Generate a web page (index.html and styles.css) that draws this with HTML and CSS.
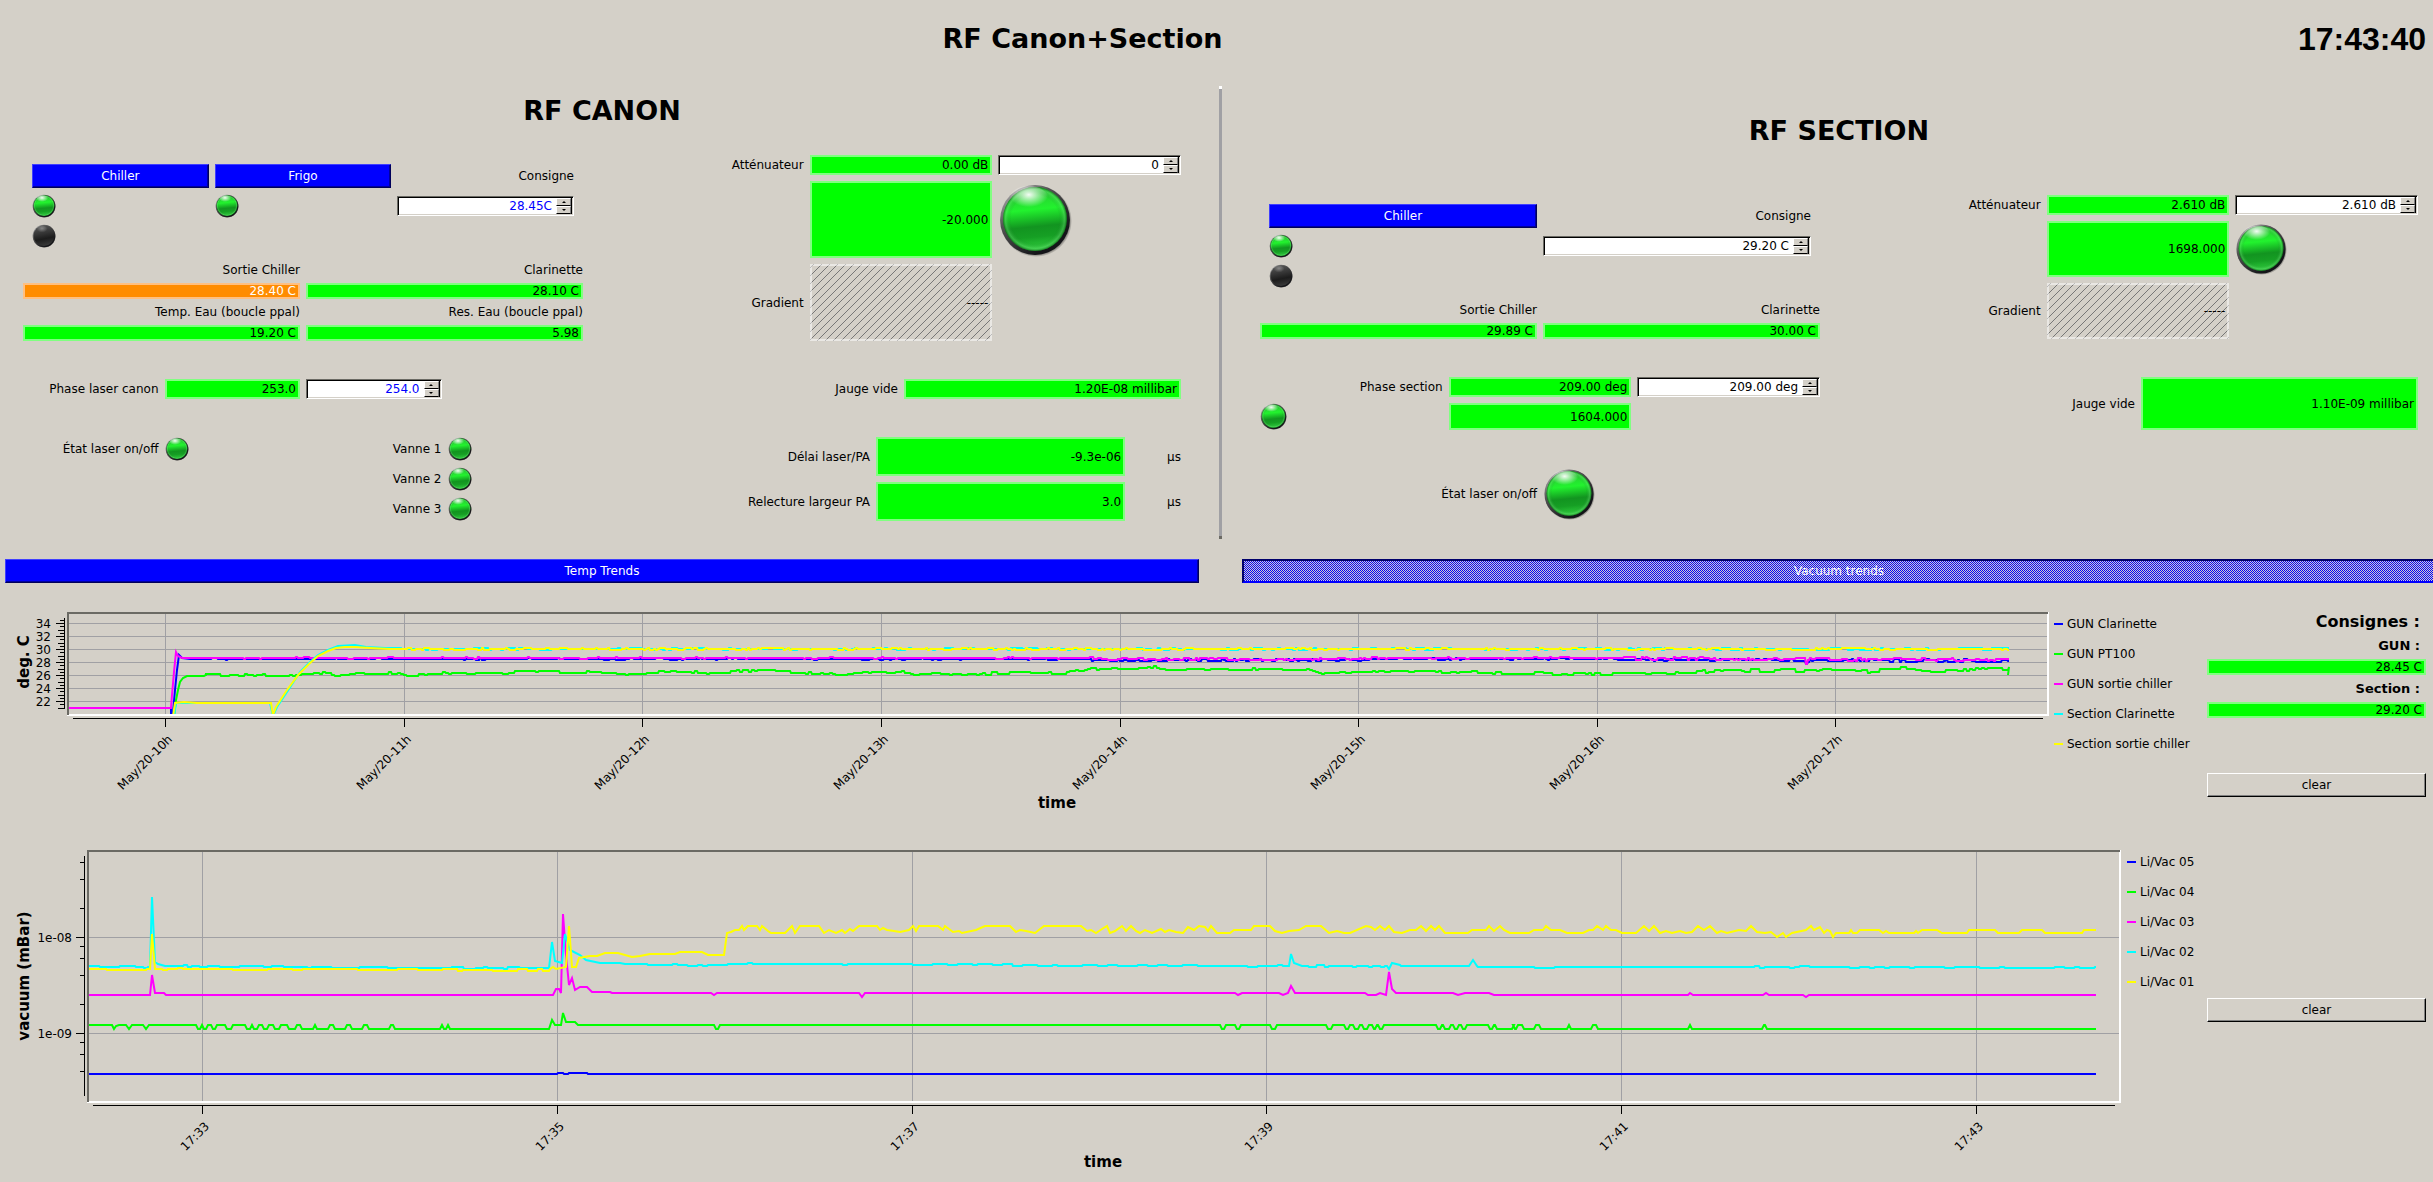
FILE: index.html
```html
<!DOCTYPE html>
<html lang="fr">
<head>
<meta charset="utf-8">
<title>RF Canon+Section</title>
<link rel="stylesheet" href="styles.css">
</head>
<body>
<svg class="defs" aria-hidden="true">
  <defs>
    <linearGradient id="rim" x1="0.15" y1="0.05" x2="0.75" y2="0.8">
      <stop offset="0" stop-color="#a8a8a8"/><stop offset="0.35" stop-color="#555"/><stop offset="1" stop-color="#141418"/>
    </linearGradient>
    <linearGradient id="glass" x1="0.45" y1="0" x2="0.55" y2="1">
      <stop offset="0" stop-color="#2bbf35"/><stop offset="0.35" stop-color="#22f22e"/><stop offset="0.62" stop-color="#129420"/><stop offset="0.78" stop-color="#169f24"/><stop offset="1" stop-color="#33d541"/>
    </linearGradient>
    <radialGradient id="edge" cx="0.5" cy="0.5" r="0.5">
      <stop offset="0.75" stop-color="#0a6a14" stop-opacity="0"/><stop offset="0.92" stop-color="#6fe07a" stop-opacity="0.35"/><stop offset="1" stop-color="#0a5a12" stop-opacity="0.7"/>
    </radialGradient>
    <radialGradient id="shine" cx="0.5" cy="0.35" r="0.5">
      <stop offset="0" stop-color="#fff" stop-opacity="0.95"/><stop offset="1" stop-color="#fff" stop-opacity="0"/>
    </radialGradient>
    <linearGradient id="off" x1="0.4" y1="0" x2="0.6" y2="1">
      <stop offset="0" stop-color="#555"/><stop offset="0.4" stop-color="#333"/><stop offset="0.65" stop-color="#1c1c1c"/><stop offset="1" stop-color="#3a3a3a"/>
    </linearGradient>
    <radialGradient id="shade" cx="0.5" cy="0.5" r="0.5">
      <stop offset="0.9" stop-color="#000" stop-opacity="0.55"/><stop offset="1" stop-color="#000" stop-opacity="0"/>
    </radialGradient>
  </defs>
  <symbol id="led-on" viewBox="0 0 72 72">
    <circle cx="37" cy="37" r="35" fill="url(#shade)"/>
    <circle cx="36" cy="36" r="34" fill="url(#rim)"/>
    <circle cx="36" cy="35" r="31" fill="url(#glass)"/>
    <circle cx="36" cy="35" r="31" fill="url(#edge)"/>
    <ellipse cx="30" cy="15" rx="19" ry="12" fill="url(#shine)"/>
  </symbol>
  <symbol id="led-off" viewBox="0 0 72 72">
    <circle cx="37" cy="37" r="35" fill="url(#shade)"/>
    <circle cx="36" cy="36" r="34" fill="url(#rim)"/>
    <circle cx="36" cy="35" r="31" fill="url(#off)"/>
    <ellipse cx="30" cy="17" rx="17" ry="12" fill="url(#shine)" opacity="0.35"/>
  </symbol>
</svg>

<header class="top">
  <h1>RF Canon+Section</h1>
  <time class="clock">17:43:40</time>
</header>

<main>
<div class="panes">
  <section class="pane pane-canon">
    <h2>RF CANON</h2>
    <div class="groups">
      <div class="block">
        <div class="box cols-3">
          <button class="cmd" type="button">Chiller</button>
          <button class="cmd" type="button">Frigo</button>
          <label class="lbl" for="c-consigne">Consigne</label>
          <svg class="led" role="img" aria-label="Chiller on"><use href="#led-on"/></svg>
          <svg class="led" role="img" aria-label="Frigo on"><use href="#led-on"/></svg>
          <div class="spin"><input id="c-consigne" class="blue" type="text" value="28.45C"><span class="arrows"><button type="button" aria-label="+" class="up"></button><button type="button" aria-label="-" class="down"></button></span></div>
          <svg class="led" role="img" aria-label="Chiller off"><use href="#led-off"/></svg>
        </div>
        <div class="cols-2 thin">
          <label class="lbl" for="c-sortie">Sortie Chiller</label>
          <label class="lbl" for="c-clar">Clarinette</label>
          <output class="val warn" id="c-sortie">28.40 C</output>
          <output class="val" id="c-clar">28.10 C</output>
          <label class="lbl" for="c-temp">Temp. Eau (boucle ppal)</label>
          <label class="lbl" for="c-res">Res. Eau (boucle ppal)</label>
          <output class="val" id="c-temp">19.20 C</output>
          <output class="val" id="c-res">5.98</output>
        </div>
      </div>
      <div class="block cols-3 rows-att">
        <label class="lbl" for="c-att">Atténuateur</label>
        <output class="val" id="c-att">0.00 dB</output>
        <div class="spin"><input type="text" value="0" aria-label="Atténuateur"><span class="arrows"><button type="button" aria-label="+" class="up"></button><button type="button" aria-label="-" class="down"></button></span></div>
        <output class="val second" id="c-lvl">-20.000</output>
        <svg class="led xl" role="img" aria-label="on"><use href="#led-on"/></svg>
        <label class="lbl" for="c-grad">Gradient</label>
        <output class="val none" id="c-grad">-----</output>
      </div>
      <div class="cols-4">
        <label class="lbl" for="c-phase">Phase laser canon</label>
        <output class="val" id="c-phase">253.0</output>
        <div class="spin"><input class="blue" type="text" value="254.0" aria-label="Phase laser canon"><span class="arrows"><button type="button" aria-label="+" class="up"></button><button type="button" aria-label="-" class="down"></button></span></div>
      </div>
      <div class="cols-2">
        <label class="lbl" for="c-vide">Jauge vide</label>
        <output class="val" id="c-vide">1.20E-08 millibar</output>
      </div>
      <div class="cols-4 rows-led">
        <span class="lbl">État laser on/off</span>
        <svg class="led" role="img" aria-label="on"><use href="#led-on"/></svg>
        <span class="lbl">Vanne 1</span>
        <svg class="led" role="img" aria-label="on"><use href="#led-on"/></svg>
        <span class="lbl third">Vanne 2</span>
        <svg class="led" role="img" aria-label="on"><use href="#led-on"/></svg>
        <span class="lbl third">Vanne 3</span>
        <svg class="led" role="img" aria-label="on"><use href="#led-on"/></svg>
      </div>
      <div class="cols-unit">
        <label class="lbl" for="c-delai">Délai laser/PA</label>
        <output class="val" id="c-delai">-9.3e-06</output>
        <span class="lbl">µs</span>
        <label class="lbl" for="c-larg">Relecture largeur PA</label>
        <output class="val" id="c-larg">3.0</output>
        <span class="lbl">µs</span>
      </div>
    </div>
  </section>

  <div class="divider"></div>

  <section class="pane pane-section">
    <h2>RF SECTION</h2>
    <div class="groups">
      <div class="block">
        <div class="box cols-2">
          <button class="cmd" type="button">Chiller</button>
          <label class="lbl" for="s-consigne">Consigne</label>
          <svg class="led" role="img" aria-label="Chiller on"><use href="#led-on"/></svg>
          <div class="spin"><input id="s-consigne" type="text" value="29.20 C"><span class="arrows"><button type="button" aria-label="+" class="up"></button><button type="button" aria-label="-" class="down"></button></span></div>
          <svg class="led" role="img" aria-label="Chiller off"><use href="#led-off"/></svg>
        </div>
        <div class="cols-2 thin">
          <label class="lbl" for="s-sortie">Sortie Chiller</label>
          <label class="lbl" for="s-clar">Clarinette</label>
          <output class="val" id="s-sortie">29.89 C</output>
          <output class="val" id="s-clar">30.00 C</output>
        </div>
      </div>
      <div class="block cols-3 rows-att">
        <label class="lbl" for="s-att">Atténuateur</label>
        <output class="val" id="s-att">2.610 dB</output>
        <div class="spin"><input type="text" value="2.610 dB" aria-label="Atténuateur"><span class="arrows"><button type="button" aria-label="+" class="up"></button><button type="button" aria-label="-" class="down"></button></span></div>
        <output class="val second" id="s-lvl">1698.000</output>
        <svg class="led lg" role="img" aria-label="on"><use href="#led-on"/></svg>
        <label class="lbl" for="s-grad">Gradient</label>
        <output class="val none" id="s-grad">-----</output>
      </div>
      <div class="cols-3 rows-phase">
        <label class="lbl" for="s-phase">Phase section</label>
        <output class="val" id="s-phase">209.00 deg</output>
        <div class="spin"><input type="text" value="209.00 deg" aria-label="Phase section"><span class="arrows"><button type="button" aria-label="+" class="up"></button><button type="button" aria-label="-" class="down"></button></span></div>
        <svg class="led md" role="img" aria-label="on"><use href="#led-on"/></svg>
        <output class="val" id="s-phase2">1604.000</output>
      </div>
      <div class="cols-2">
        <label class="lbl" for="s-vide">Jauge vide</label>
        <output class="val" id="s-vide">1.10E-09 millibar</output>
      </div>
      <div class="cols-2 rows-laser">
        <span class="lbl">État laser on/off</span>
        <svg class="led lg" role="img" aria-label="on"><use href="#led-on"/></svg>
      </div>
    </div>
  </section>
</div>

<nav class="tabs">
  <button class="cmd" type="button">Temp Trends</button>
  <button class="cmd pressed" type="button" aria-pressed="true">Vacuum trends</button>
</nav>

<section class="trend trend-temp">
  <svg id="temp" class="plot" viewBox="5 602 2045 213" role="img" aria-label="deg. C / time"></svg>
  <ul class="legend">
    <li><i class="key k-blue"></i>GUN Clarinette</li>
    <li><i class="key k-green"></i>GUN PT100</li>
    <li><i class="key k-magenta"></i>GUN sortie chiller</li>
    <li><i class="key k-cyan"></i>Section Clarinette</li>
    <li><i class="key k-yellow"></i>Section sortie chiller</li>
  </ul>
  <div class="side">
    <h3>Consignes :</h3>
    <label class="side-lbl" for="t-gun">GUN :</label>
    <output class="val" id="t-gun">28.45 C</output>
    <label class="side-lbl" for="t-sec">Section :</label>
    <output class="val" id="t-sec">29.20 C</output>
    <button class="clear" type="button">clear</button>
  </div>
</section>

<section class="trend trend-vac">
  <svg id="vac" class="plot" viewBox="5 840 2118 336" role="img" aria-label="vacuum (mBar) / time"></svg>
  <ul class="legend">
    <li><i class="key k-blue"></i>Li/Vac 05</li>
    <li><i class="key k-green"></i>Li/Vac 04</li>
    <li><i class="key k-magenta"></i>Li/Vac 03</li>
    <li><i class="key k-cyan"></i>Li/Vac 02</li>
    <li><i class="key k-yellow"></i>Li/Vac 01</li>
  </ul>
  <div class="side">
    <button class="clear" type="button">clear</button>
  </div>
</section>
</main>
<script src="plots.js"></script>
</body>
</html>
```
FILE: styles.css
```css
* { box-sizing: border-box; }

body {
  margin: 0;
  padding-left: 5px;
  background: #d4d0c8;
  color: #000;
  font: 12px/14px "DejaVu Sans", sans-serif;
  overflow-x: hidden;
}

.defs { position: absolute; width: 0; height: 0; }

button, input { font: inherit; color: inherit; }
h1, h2, h3 { margin: 0; font-size: 27px; line-height: 32px; text-align: center; }

/* header */
.top {
  display: grid;
  grid-template-columns: minmax(0, 1fr) 266px;
  align-items: center;
  padding: 21px 7px 29px 0;
}
.clock { font: bold 32px/36px "Liberation Sans", Arial, sans-serif; text-align: right; }

/* the two instrument panes run slightly past the right edge of the window */
.panes {
  display: grid;
  grid-template-columns: minmax(0, 1fr) 43px minmax(0, 1fr);
  margin-right: -3px;
}
.divider {
  width: 3px;
  margin-left: 20px;
  background: #a0a0a4;
  border-top: 3px solid #fff;
  border-bottom: 3px solid #6b6a64;
}
.pane { padding: 9px 18px 18px; }
.pane-section { padding-top: 29px; }
.groups {
  display: grid;
  grid-template-columns: minmax(0, 1fr) minmax(0, 1fr);
  gap: 38px;
  margin-top: 28px;
}
.pane-section .groups { margin-top: 48px; }

.cols-2, .cols-3, .cols-4, .cols-unit { display: grid; gap: 6px; }
.cols-2 { grid-template-columns: repeat(2, minmax(0, 1fr)); }
.cols-3 { grid-template-columns: repeat(3, minmax(0, 1fr)); }
.cols-4 { grid-template-columns: repeat(4, minmax(0, 1fr)); }
.cols-unit { grid-template-columns: 5fr 5fr 1fr; grid-auto-rows: 39px; }
.box { padding: 9px; grid-auto-rows: 24px; align-items: center; }
.thin { margin-top: 6px; }
.thin .val { height: 16px; line-height: 12px; }
.rows-att { grid-template-rows: 20px; grid-auto-rows: 77px; }
.pane-section .rows-att { grid-auto-rows: 56px; }
.rows-led { grid-auto-rows: 24px; }
.rows-phase { grid-template-rows: 20px 27px; }
.rows-laser { grid-auto-rows: 52px; }
.second { grid-column: 2; }
.third { grid-column: 3; }

.lbl { text-align: right; align-self: center; }

.val {
  display: flex;
  align-items: center;
  justify-content: flex-end;
  min-height: 16px;
  padding-right: 2px;
  border: 2px solid #80ff80;
  background: #0f0;
}
.warn { border-color: #ffbf80; background: #ff8c00; color: #fff; }
.none {
  border-color: rgba(255, 255, 255, 0.5);
  background: linear-gradient(135deg, transparent 45%, #777 45% 55%, transparent 55%) 0 0 / 8px 8px;
}

.cmd {
  height: 24px;
  padding: 0;
  border: 1px solid;
  border-color: #3f3fff #00005a #00005a #3f3fff;
  box-shadow: inset -1px -1px #00009f;
  background: #00f;
  color: #fff;
  text-align: center;
}
.pressed {
  border: 2px solid;
  border-color: #00006b #00f #00f #00006b;
  box-shadow: none;
  background: repeating-conic-gradient(#00f 0% 25%, #d4d0c8 0% 50%) 0 0 / 2px 2px;
}

.led { width: 24px; height: 24px; align-self: center; }
.led.md { width: 27px; height: 27px; }
.led.lg { width: 52px; height: 52px; }
.led.xl { width: 74px; height: 74px; }

/* spin boxes */
.spin {
  display: flex;
  height: 20px;
  border: 1px solid;
  border-color: #6b6a64 #fff #fff #6b6a64;
  background: #fff;
  box-shadow: inset 1px 1px #000, inset -1px -1px #d4d0c8;
}
.spin input {
  flex: 1;
  min-width: 0;
  padding: 1px 4px 1px 3px;
  border: 0;
  background: none;
  text-align: right;
}
.spin .blue { color: #00f; }
.arrows {
  display: grid;
  grid-template-rows: 1fr 1fr;
  width: 16px;
  margin: 1px 1px 1px 0;
  border-right: 1px solid #000;
}
.arrows button {
  display: grid;
  place-items: center;
  padding: 0;
  border: 1px solid;
  border-color: #fff #808080 #000 #fff;
  background: #d4d0c8;
}
.arrows button::after { content: ""; border: 2px solid transparent; }
.arrows .up::after { border-top: 0; border-bottom-color: #000; }
.arrows .down::after { border-bottom: 0; border-top-color: #000; }

/* trend tabs */
.tabs {
  display: grid;
  grid-template-columns: minmax(0, 1fr) minmax(0, 1fr);
  gap: 43px;
  margin: 20px -3px 19px 0;
}

/* trends */
.trend { display: grid; padding-right: 7px; }
.trend-temp { grid-template-columns: minmax(0, 1fr) 157px 219px; }
.trend-vac { grid-template-columns: minmax(0, 1fr) 84px 219px; margin-top: 25px; }
.plot { display: block; width: 100%; height: auto; }
.legend {
  display: flex;
  flex-direction: column;
  gap: 16px;
  margin: 15px 0 0 4px;
  padding: 0;
  list-style: none;
  white-space: nowrap;
}
.legend li { display: flex; align-items: center; gap: 4px; }
.key { width: 9px; height: 2px; }
.k-blue { background: #00f; }
.k-green { background: #0f0; }
.k-magenta { background: #f0f; }
.k-cyan { background: #0ff; }
.k-yellow { background: #ff0; }

.side { display: flex; flex-direction: column; gap: 6px; padding-top: 10px; }
.side h3 { font-size: 16px; line-height: 20px; text-align: right; padding-right: 6px; }
.side-lbl { font-size: 13px; line-height: 15px; font-weight: bold; text-align: right; padding-right: 6px; }
.side .val { height: 16px; line-height: 12px; }
.clear {
  height: 24px;
  padding: 0;
  border: 1px solid;
  border-color: #fff #000 #000 #fff;
  box-shadow: inset -1px -1px #808080;
  background: #d4d0c8;
  text-align: center;
}
.trend-temp .clear { margin-top: 49px; }
.trend-vac .clear { margin-top: 148px; }

/* plot drawing */
.plot text { font: 12px "DejaVu Sans", sans-serif; }
.plot .title { font-size: 15px; font-weight: bold; text-anchor: middle; }
.plot .end { text-anchor: end; }
.plot path, .plot polyline { fill: none; }
.plot path { shape-rendering: crispEdges; }
.axis { stroke: #000; stroke-width: 1; }
.grid { stroke: #a0a0a4; stroke-width: 1; }
.series { stroke-width: 2; }
.s-blue { stroke: #00f; }
.s-green { stroke: #0f0; }
.s-magenta { stroke: #f0f; }
.s-cyan { stroke: #0ff; }
.s-yellow { stroke: #ff0; }
.frame-dark { stroke: #6b6a64; stroke-width: 2; }
.frame-light { stroke: #fff; stroke-width: 2; }
```
FILE: plots.js
```js
const NS = "http://www.w3.org/2000/svg";

function add(parent, tag, attrs, text) {
  const el = document.createElementNS(NS, tag);
  for (const k in attrs) el.setAttribute(k, attrs[k]);
  if (text !== undefined) el.textContent = text;
  parent.appendChild(el);
  return el;
}

function line(svg, cls, x1, y1, x2, y2) {
  add(svg, "path", { class: cls, d: `M${x1} ${y1}L${x2} ${y2}` });
}

// Small repeatable random generator, so that the jitter is stable between loads.
function random(seed) {
  return () => (seed = (seed * 16807) % 2147483647) / 2147483647;
}

// Resample a key-point list and hold short random steps on top of it.
// Values are quantised, and a point is written only where the level changes.
function jitter(points, from, amp, seed, step) {
  const rnd = random(seed);
  for (let n = 0; n < 5; n++) rnd();
  const out = points.filter(p => p[0] <= from);
  const end = points[points.length - 1][0];
  let i = 0, off = 0, last = null;
  for (let x = from; x <= end; x += step) {
    while (i < points.length - 2 && points[i + 1][0] < x) i++;
    const [x0, y0] = points[i], [x1, y1] = points[i + 1];
    const a = typeof amp === "function" ? amp(x) : amp;
    if (rnd() < 0.5) off = (rnd() * 2 - 1) * a;
    const y = Math.round(y0 + (y1 - y0) * (x - x0) / (x1 - x0) + off);
    if (y !== last) {
      if (last !== null) out.push([x - 1, last]);
      out.push([x, y]);
      last = y;
    }
  }
  out.push([end, last]);
  return out;
}

function chart(id, o) {
  const svg = document.getElementById(id);
  const { left, right, top, bottom } = o.frame;
  const clip = add(add(svg, "defs", {}), "clipPath", { id: id + "-clip" });
  add(clip, "rect", { x: left + 2, y: top + 2, width: right - left - 4, height: bottom - top - 4 });

  for (const [x] of o.xTicks) line(svg, "grid", x + 0.5, top, x + 0.5, bottom);
  for (const [y] of o.yTicks) line(svg, "grid", left, y + 0.5, right, y + 0.5);

  const g = add(svg, "g", { "clip-path": `url(#${id}-clip)` });
  for (const [color, pts] of o.series) {
    add(g, "polyline", { class: "series s-" + color, points: pts.map(p => p[0] + "," + p[1]).join(" ") });
  }

  add(svg, "path", { class: "frame-light", d: `M${left} ${bottom - 1}H${right - 1}V${top}` });
  add(svg, "path", { class: "frame-dark", d: `M${left + 1} ${bottom - 1}V${top + 1}H${right - 1}` });

  line(svg, "axis", o.axisX + 0.5, o.axisSpan[0], o.axisX + 0.5, o.axisSpan[1]);
  for (const [y, label] of o.yTicks) {
    line(svg, "axis", o.axisX - 8, y + 0.5, o.axisX, y + 0.5);
    add(svg, "text", { class: "end", x: o.labelX, y: y + 5 }, label);
  }
  for (const [y, len] of o.minor) line(svg, "axis", o.axisX - len, Math.round(y) + 0.5, o.axisX, Math.round(y) + 0.5);

  line(svg, "axis", o.base[0], bottom + 2.5, o.base[1], bottom + 2.5);
  for (const [x, label] of o.xTicks) {
    line(svg, "axis", x + 0.5, bottom + 2, x + 0.5, bottom + 11);
    add(svg, "text", { class: "end", transform: `translate(${x + 8} ${bottom + 24}) rotate(-45)` }, label);
  }
  add(svg, "text", { class: "title", x: o.xTitle[0], y: o.xTitle[1] }, "time");
  add(svg, "text", { class: "title", transform: `translate(${o.yTitle[0]} ${o.yTitle[1]}) rotate(-90)` }, o.yTitle[2]);
}

/* ---- temperatures ---- */
const deg = v => 701 - (v - 22) * 6.5;
const minorDeg = [];
for (let v = 21; v <= 34.7; v += 0.5) if (v % 2 !== 0) minorDeg.push([deg(v), v % 1 === 0 ? 6 : 4]);

const settle = x => x < 1090 ? 0.6 : x < 1340 ? 1.2 : x < 1620 ? 0.7 : 1.5;
const gunClar = jitter([[69, 708], [171, 708], [171, 720], [173, 712], [175, 690], [177, 670], [179, 655], [182, 658], [190, 659], [1090, 659], [1095, 660], [1360, 660], [1370, 659], [1620, 659], [1700, 660], [1804, 660], [1806, 664], [1810, 660], [2009, 661]], 190, settle, 1181, 2);
const gunChiller = jitter([[69, 708], [171, 708], [172, 695], [174, 672], [176, 652], [178, 656], [180, 657], [190, 658], [1090, 658], [1095, 659], [1360, 659], [1370, 658], [1620, 658], [1804, 659], [1806, 663], [1810, 659], [2009, 660]], 182, settle, 2377, 2);
const gunPt = jitter([[174, 716], [176, 700], [178, 690], [180, 682], [183, 678], [187, 676], [204, 676], [206, 675], [310, 675], [328, 672], [334, 675], [350, 674], [370, 673], [400, 673], [410, 675], [440, 673], [475, 674], [520, 672], [600, 672], [620, 674], [680, 671], [720, 673], [760, 670], [790, 672], [840, 674], [900, 672], [915, 674], [1060, 673], [1100, 668], [1125, 669], [1155, 667], [1170, 669], [1230, 669], [1310, 669], [1322, 673], [1380, 671], [1440, 672], [1500, 673], [1590, 674], [1690, 673], [1715, 670], [1830, 671], [1850, 672], [1900, 669], [1940, 671], [1984, 669], [2009, 669]], 206, x => x < 1700 ? 1.3 : 1.9, 577, 3);
const gunPtEnd = gunPt.concat([[2008, 675]]);
const secChiller = jitter([[173, 716], [175, 703], [184, 702], [197, 703], [270, 703], [271, 703], [273, 715], [276, 707], [287, 690], [299, 674], [310, 663], [318, 656], [328, 651], [336, 648], [345, 647], [355, 647], [370, 648], [390, 649], [2009, 649]], 400, 0.8, 7703, 2);
const secClar = jitter([[174, 716], [176, 703], [270, 703], [273, 716], [277, 707], [289, 689], [300, 672], [310, 662], [318, 655], [328, 650], [338, 646], [355, 645], [366, 647], [385, 648], [420, 649], [2009, 649]], 390, x => x > 1200 && x < 1350 || x > 1600 ? 1.2 : 0.8, 9127, 3);

chart("temp", {
  frame: { left: 67, right: 2049, top: 612, bottom: 716 },
  axisX: 64, axisSpan: [618, 709], labelX: 51,
  base: [73, 2043],
  yTicks: [34, 32, 30, 28, 26, 24, 22].map(v => [deg(v), v]),
  minor: minorDeg,
  xTicks: [[165, 10], [404, 11], [642, 12], [881, 13], [1120, 14], [1358, 15], [1597, 16], [1835, 17]].map(([x, h]) => [x, `May/20-${h}h`]),
  xTitle: [1057, 808], yTitle: [29, 662, "deg. C"],
  series: [["blue", gunClar], ["green", gunPtEnd], ["magenta", gunChiller], ["cyan", secClar], ["yellow", secChiller]]
});

/* ---- vacuum, log scale: one decade is 96 units ---- */
const logY = v => 937 - 96 * Math.log10(v / 1e-8);

const dips = [[198, 200], [204, 206], [213, 215], [227, 231], [247, 250], [254, 257], [264, 267], [275, 279], [289, 295], [302, 313], [317, 328], [335, 345], [352, 362], [369, 389], [395, 440], [444, 446], [450, 549]];
const dipsRight = [[716, 718], [1222, 1224], [1237, 1239], [1272, 1275], [1328, 1331], [1346, 1348], [1355, 1358], [1364, 1367], [1374, 1375], [1380, 1382], [1438, 1440], [1445, 1449], [1455, 1457], [1463, 1465], [1490, 1492], [1497, 1512], [1515, 1516], [1524, 1534], [1541, 1567], [1571, 1591], [1598, 1688], [1692, 1762], [1767, 2096]];
const pulse = list => list.flatMap(([a, b]) => [[a - 2, 1025], [a, 1029], [b, 1029], [b + 2, 1025]]);
const vac4 = [[89, 1025], [112, 1025], [114, 1029], [116, 1026], [119, 1025], [126, 1025], [129, 1029], [132, 1025], [143, 1025], [146, 1029], [149, 1025]]
  .concat(pulse(dips).slice(0, -1), [[552, 1020], [555, 1025], [561, 1025], [563, 1013], [566, 1022], [575, 1022], [578, 1025]], pulse(dipsRight).slice(0, -1));

const vac3 = [[89, 995], [150, 995], [152, 975], [155, 993], [164, 993], [166, 995], [553, 995], [556, 989], [559, 989], [561, 993], [563, 914], [566, 955], [569, 985], [572, 978], [575, 990], [580, 987], [587, 987], [592, 992], [610, 992], [612, 993], [711, 993], [714, 995], [717, 993], [859, 993], [862, 997], [865, 993], [1235, 993], [1238, 995], [1242, 993], [1279, 993], [1283, 995], [1288, 993], [1291, 986], [1295, 993], [1365, 993], [1368, 995], [1376, 995], [1380, 993], [1386, 995], [1389, 972], [1392, 989], [1396, 993], [1453, 993], [1458, 995], [1465, 993], [1489, 993], [1494, 995], [1688, 995], [1690, 993], [1693, 995], [1763, 995], [1766, 993], [1769, 995], [1803, 995], [1806, 997], [1809, 995], [2096, 995]];

const vac2 = [[89, 966]].concat(
  jitter([[89, 966], [149, 967]], 92, 0.7, 3001, 4),
  [[150, 966], [152, 897], [155, 962], [158, 964], [165, 966]],
  jitter([[166, 966], [280, 967], [400, 968], [548, 968]], 168, 0.7, 8009, 4),
  [[549, 968], [552, 942], [555, 961], [562, 963], [565, 934], [570, 950], [580, 955], [586, 960], [600, 963], [620, 963], [625, 964]],
  jitter([[626, 964], [680, 965], [720, 965], [730, 964], [900, 964], [1000, 965], [1288, 966]], 628, 0.7, 6007, 5),
  [[1289, 966], [1291, 954], [1294, 963], [1302, 966]],
  jitter([[1303, 966], [1360, 966], [1387, 967]], 1305, 0.8, 4001, 4),
  [[1389, 969], [1392, 963], [1400, 965]],
  jitter([[1401, 966], [1468, 966]], 1403, 0.6, 2003, 5),
  [[1469, 966], [1473, 960], [1477, 966]],
  jitter([[1478, 967], [1800, 967], [2096, 968]], 1480, 0.7, 9001, 5));

const osc = [[900, 932], [909, 930], [913, 926], [916, 931], [919, 926], [938, 926], [943, 930], [945, 926], [953, 932], [959, 931], [962, 933], [976, 930], [985, 926], [1010, 926], [1016, 932], [1020, 930], [1026, 931], [1035, 933], [1044, 926], [1081, 926], [1087, 931], [1091, 930], [1096, 933], [1102, 929], [1107, 926], [1110, 933], [1115, 931], [1122, 926], [1126, 931], [1131, 926], [1136, 931], [1140, 933], [1145, 930], [1152, 933], [1161, 929], [1165, 932], [1169, 930], [1176, 932], [1183, 933], [1188, 927], [1194, 930], [1199, 926], [1205, 927], [1208, 931], [1211, 926], [1217, 933], [1230, 933], [1234, 930], [1251, 930], [1254, 926], [1270, 926], [1275, 931], [1282, 933], [1289, 931], [1299, 930], [1306, 926], [1321, 926], [1329, 933], [1337, 931], [1344, 933], [1350, 933], [1366, 926], [1371, 927], [1375, 930], [1380, 926], [1385, 930], [1389, 926], [1394, 932], [1402, 933], [1410, 930], [1416, 930], [1421, 926], [1426, 931], [1431, 926], [1435, 930], [1439, 926], [1445, 933], [1468, 933], [1472, 930], [1486, 930], [1489, 926], [1494, 931], [1500, 926], [1504, 930], [1510, 933], [1529, 933], [1534, 930], [1543, 930], [1546, 926], [1551, 930], [1560, 930], [1567, 933], [1583, 933], [1589, 930], [1593, 930], [1597, 926], [1603, 930], [1606, 926], [1611, 930], [1616, 930], [1622, 933], [1636, 933], [1644, 926], [1649, 931], [1654, 926], [1660, 933], [1666, 931], [1672, 933], [1680, 931], [1686, 933], [1692, 932], [1698, 926], [1704, 930], [1710, 926], [1717, 933], [1721, 931], [1727, 933], [1739, 930], [1746, 931], [1751, 926], [1757, 932], [1765, 933], [1771, 932], [1777, 937], [1783, 933], [1786, 937], [1792, 933], [1806, 930], [1811, 926], [1814, 930], [1820, 927], [1824, 933], [1827, 930], [1830, 931], [1833, 937], [1836, 933], [1849, 933], [1851, 930], [1853, 933], [1857, 933], [1860, 930], [1879, 930], [1883, 933], [1886, 931], [1889, 933], [1914, 933], [1916, 931], [1918, 933], [1922, 930], [1937, 930], [1942, 933], [1967, 933], [1969, 930], [1995, 930], [1998, 933], [2019, 933], [2022, 930], [2042, 930], [2045, 933], [2082, 933], [2084, 930], [2096, 930]];
const vac1 = [[89, 969]].concat(
  jitter([[89, 969], [130, 970], [149, 969]], 92, 0.6, 3109, 5),
  [[150, 969], [152, 934], [155, 969]],
  jitter([[156, 969], [400, 970], [549, 970]], 158, 0.9, 1709, 5),
  [[550, 969], [553, 967], [556, 969], [566, 967], [569, 926], [572, 967], [576, 967], [579, 958], [590, 956], [597, 956], [605, 953], [618, 953], [632, 957], [640, 956], [650, 954], [675, 954], [680, 952], [702, 952], [708, 955], [724, 955], [727, 933], [731, 932], [735, 930], [739, 930], [742, 926], [744, 930], [748, 926], [757, 926], [760, 930], [762, 926], [768, 931], [771, 933], [785, 933], [792, 926], [795, 933], [800, 926], [819, 926], [824, 933], [829, 930], [836, 933], [842, 930], [845, 933], [850, 929], [853, 931], [859, 926], [877, 926], [880, 930], [883, 928], [887, 930], [894, 931]],
  osc);

chart("vac", {
  frame: { left: 87, right: 2121, top: 850, bottom: 1103 },
  axisX: 84, axisSpan: [856, 1096], labelX: 72,
  base: [93, 2115],
  yTicks: [[937, "1e-08"], [1033, "1e-09"]],
  minor: [6e-8, 4e-8, 2e-8, 8e-9, 6e-9, 4e-9, 2e-9, 8e-10, 6e-10, 4e-10].map(v => [logY(v), 4]),
  xTicks: [[202, "17:33"], [557, "17:35"], [912, "17:37"], [1266, "17:39"], [1621, "17:41"], [1976, "17:43"]],
  xTitle: [1103, 1167], yTitle: [29, 976, "vacuum (mBar)"],
  series: [
    ["blue", [[89, 1074], [557, 1074], [558, 1073], [563, 1073], [564, 1074], [568, 1074], [569, 1073], [587, 1073], [588, 1074], [2096, 1074]]],
    ["green", vac4], ["magenta", vac3], ["cyan", vac2], ["yellow", vac1]
  ]
});
```
